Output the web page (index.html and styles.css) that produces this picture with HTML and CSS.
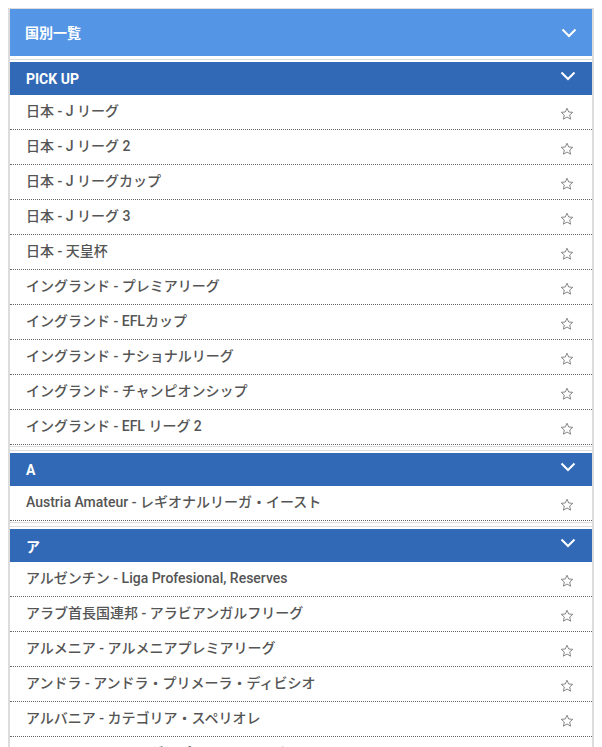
FILE: index.html
```html
<!DOCTYPE html>
<html lang="ja">
<head>
<meta charset="utf-8">
<title>国別一覧</title>
<link rel="stylesheet" href="styles.css">
</head>
<body>
<div class="panel">
  <div class="top-head">
    <span class="top-title">国別一覧</span>
    <svg class="chev chev-top" viewBox="0 0 16 10" width="16" height="10"><path d="M1.5 1.5 L8 8 L14.5 1.5" fill="none" stroke="#fff" stroke-width="2"/></svg>
  </div>

  <section class="group">
    <div class="group-head"><span>PICK UP</span><svg class="chev" viewBox="0 0 16 10" width="16" height="10"><path d="M1.5 1.5 L8 8 L14.5 1.5" fill="none" stroke="#fff" stroke-width="2"/></svg></div>
    <ul class="rows">
      <li class="row"><span class="name">日本 - J リーグ</span><svg class="star" viewBox="0 0 14 14" width="14" height="14"><path d="M7 1.2 L8.7 5 L12.8 5.3 L9.7 8 L10.6 12.2 L7 10 L3.4 12.2 L4.3 8 L1.2 5.3 L5.3 5 Z" fill="none" stroke="#888" stroke-width="1" stroke-linejoin="round"/></svg></li>
      <li class="row"><span class="name">日本 - J リーグ 2</span><svg class="star" viewBox="0 0 14 14" width="14" height="14"><path d="M7 1.2 L8.7 5 L12.8 5.3 L9.7 8 L10.6 12.2 L7 10 L3.4 12.2 L4.3 8 L1.2 5.3 L5.3 5 Z" fill="none" stroke="#888" stroke-width="1" stroke-linejoin="round"/></svg></li>
      <li class="row"><span class="name">日本 - J リーグカップ</span><svg class="star" viewBox="0 0 14 14" width="14" height="14"><path d="M7 1.2 L8.7 5 L12.8 5.3 L9.7 8 L10.6 12.2 L7 10 L3.4 12.2 L4.3 8 L1.2 5.3 L5.3 5 Z" fill="none" stroke="#888" stroke-width="1" stroke-linejoin="round"/></svg></li>
      <li class="row"><span class="name">日本 - J リーグ 3</span><svg class="star" viewBox="0 0 14 14" width="14" height="14"><path d="M7 1.2 L8.7 5 L12.8 5.3 L9.7 8 L10.6 12.2 L7 10 L3.4 12.2 L4.3 8 L1.2 5.3 L5.3 5 Z" fill="none" stroke="#888" stroke-width="1" stroke-linejoin="round"/></svg></li>
      <li class="row"><span class="name">日本 - 天皇杯</span><svg class="star" viewBox="0 0 14 14" width="14" height="14"><path d="M7 1.2 L8.7 5 L12.8 5.3 L9.7 8 L10.6 12.2 L7 10 L3.4 12.2 L4.3 8 L1.2 5.3 L5.3 5 Z" fill="none" stroke="#888" stroke-width="1" stroke-linejoin="round"/></svg></li>
      <li class="row"><span class="name">イングランド - プレミアリーグ</span><svg class="star" viewBox="0 0 14 14" width="14" height="14"><path d="M7 1.2 L8.7 5 L12.8 5.3 L9.7 8 L10.6 12.2 L7 10 L3.4 12.2 L4.3 8 L1.2 5.3 L5.3 5 Z" fill="none" stroke="#888" stroke-width="1" stroke-linejoin="round"/></svg></li>
      <li class="row"><span class="name">イングランド - EFLカップ</span><svg class="star" viewBox="0 0 14 14" width="14" height="14"><path d="M7 1.2 L8.7 5 L12.8 5.3 L9.7 8 L10.6 12.2 L7 10 L3.4 12.2 L4.3 8 L1.2 5.3 L5.3 5 Z" fill="none" stroke="#888" stroke-width="1" stroke-linejoin="round"/></svg></li>
      <li class="row"><span class="name">イングランド - ナショナルリーグ</span><svg class="star" viewBox="0 0 14 14" width="14" height="14"><path d="M7 1.2 L8.7 5 L12.8 5.3 L9.7 8 L10.6 12.2 L7 10 L3.4 12.2 L4.3 8 L1.2 5.3 L5.3 5 Z" fill="none" stroke="#888" stroke-width="1" stroke-linejoin="round"/></svg></li>
      <li class="row"><span class="name">イングランド - チャンピオンシップ</span><svg class="star" viewBox="0 0 14 14" width="14" height="14"><path d="M7 1.2 L8.7 5 L12.8 5.3 L9.7 8 L10.6 12.2 L7 10 L3.4 12.2 L4.3 8 L1.2 5.3 L5.3 5 Z" fill="none" stroke="#888" stroke-width="1" stroke-linejoin="round"/></svg></li>
      <li class="row"><span class="name">イングランド - EFL リーグ 2</span><svg class="star" viewBox="0 0 14 14" width="14" height="14"><path d="M7 1.2 L8.7 5 L12.8 5.3 L9.7 8 L10.6 12.2 L7 10 L3.4 12.2 L4.3 8 L1.2 5.3 L5.3 5 Z" fill="none" stroke="#888" stroke-width="1" stroke-linejoin="round"/></svg></li>
    </ul>
  </section>

  <section class="group">
    <div class="group-head"><span>A</span><svg class="chev" viewBox="0 0 16 10" width="16" height="10"><path d="M1.5 1.5 L8 8 L14.5 1.5" fill="none" stroke="#fff" stroke-width="2"/></svg></div>
    <ul class="rows">
      <li class="row"><span class="name">Austria Amateur - レギオナルリーガ・イースト</span><svg class="star" viewBox="0 0 14 14" width="14" height="14"><path d="M7 1.2 L8.7 5 L12.8 5.3 L9.7 8 L10.6 12.2 L7 10 L3.4 12.2 L4.3 8 L1.2 5.3 L5.3 5 Z" fill="none" stroke="#888" stroke-width="1" stroke-linejoin="round"/></svg></li>
    </ul>
  </section>

  <section class="group">
    <div class="group-head"><span>ア</span><svg class="chev" viewBox="0 0 16 10" width="16" height="10"><path d="M1.5 1.5 L8 8 L14.5 1.5" fill="none" stroke="#fff" stroke-width="2"/></svg></div>
    <ul class="rows">
      <li class="row"><span class="name">アルゼンチン - Liga Profesional, Reserves</span><svg class="star" viewBox="0 0 14 14" width="14" height="14"><path d="M7 1.2 L8.7 5 L12.8 5.3 L9.7 8 L10.6 12.2 L7 10 L3.4 12.2 L4.3 8 L1.2 5.3 L5.3 5 Z" fill="none" stroke="#888" stroke-width="1" stroke-linejoin="round"/></svg></li>
      <li class="row"><span class="name">アラブ首長国連邦 - アラビアンガルフリーグ</span><svg class="star" viewBox="0 0 14 14" width="14" height="14"><path d="M7 1.2 L8.7 5 L12.8 5.3 L9.7 8 L10.6 12.2 L7 10 L3.4 12.2 L4.3 8 L1.2 5.3 L5.3 5 Z" fill="none" stroke="#888" stroke-width="1" stroke-linejoin="round"/></svg></li>
      <li class="row"><span class="name">アルメニア - アルメニアプレミアリーグ</span><svg class="star" viewBox="0 0 14 14" width="14" height="14"><path d="M7 1.2 L8.7 5 L12.8 5.3 L9.7 8 L10.6 12.2 L7 10 L3.4 12.2 L4.3 8 L1.2 5.3 L5.3 5 Z" fill="none" stroke="#888" stroke-width="1" stroke-linejoin="round"/></svg></li>
      <li class="row"><span class="name">アンドラ - アンドラ・プリメーラ・ディビシオ</span><svg class="star" viewBox="0 0 14 14" width="14" height="14"><path d="M7 1.2 L8.7 5 L12.8 5.3 L9.7 8 L10.6 12.2 L7 10 L3.4 12.2 L4.3 8 L1.2 5.3 L5.3 5 Z" fill="none" stroke="#888" stroke-width="1" stroke-linejoin="round"/></svg></li>
      <li class="row"><span class="name">アルバニア - カテゴリア・スペリオレ</span><svg class="star" viewBox="0 0 14 14" width="14" height="14"><path d="M7 1.2 L8.7 5 L12.8 5.3 L9.7 8 L10.6 12.2 L7 10 L3.4 12.2 L4.3 8 L1.2 5.3 L5.3 5 Z" fill="none" stroke="#888" stroke-width="1" stroke-linejoin="round"/></svg></li>
      <li class="row"><span class="name">アルジェリア - リーグ・プロフェッショネル 1</span><svg class="star" viewBox="0 0 14 14" width="14" height="14"><path d="M7 1.2 L8.7 5 L12.8 5.3 L9.7 8 L10.6 12.2 L7 10 L3.4 12.2 L4.3 8 L1.2 5.3 L5.3 5 Z" fill="none" stroke="#888" stroke-width="1" stroke-linejoin="round"/></svg></li>
    </ul>
  </section>
</div>
</body>
</html>
```
FILE: styles.css
```css
* { box-sizing: border-box; }
html, body { background: #fff; }
body {
  margin: 8px;
  font-family: Roboto, "Noto Sans CJK JP", "Liberation Sans", sans-serif;
  color: #555;
}
.panel {
  border-top: 1px solid #dcdcdc;
  border-left: 2px solid #dcdcdc;
  border-right: 2px solid #dcdcdc;
}
.top-head {
  height: 47px;
  background: #5595e5;
  display: flex;
  align-items: center;
  justify-content: space-between;
  padding: 0 15px 0 15px;
}
.top-title {
  color: #fff;
  font-size: 14px;
  font-weight: 700;
  margin-top: -1px;
}
.chev { display: block; }
.group {
  margin-top: 3px;
  border-top: 1px solid #dcdcdc;
  border-bottom: 1px solid #dcdcdc;
  padding: 2px 0 1px;
}
.group-head {
  height: 33px;
  background: #3169b7;
  display: flex;
  align-items: center;
  justify-content: space-between;
  padding: 0 16px 0 16px;
  color: #fff;
  font-size: 14px;
  font-weight: 700;
}
.group-head .chev { margin-top: -6px; }
.rows { list-style: none; margin: 0; padding: 0; }
.row {
  height: 35px;
  border-bottom: 1px dotted #666;
  display: flex;
  align-items: center;
  justify-content: space-between;
  padding: 0 18px 0 16px;
}
.name {
  font-size: 14px;
  font-weight: 500;
  color: #555;
  margin-top: -4px;
}
.star { display: block; margin-top: 3px; }
```
